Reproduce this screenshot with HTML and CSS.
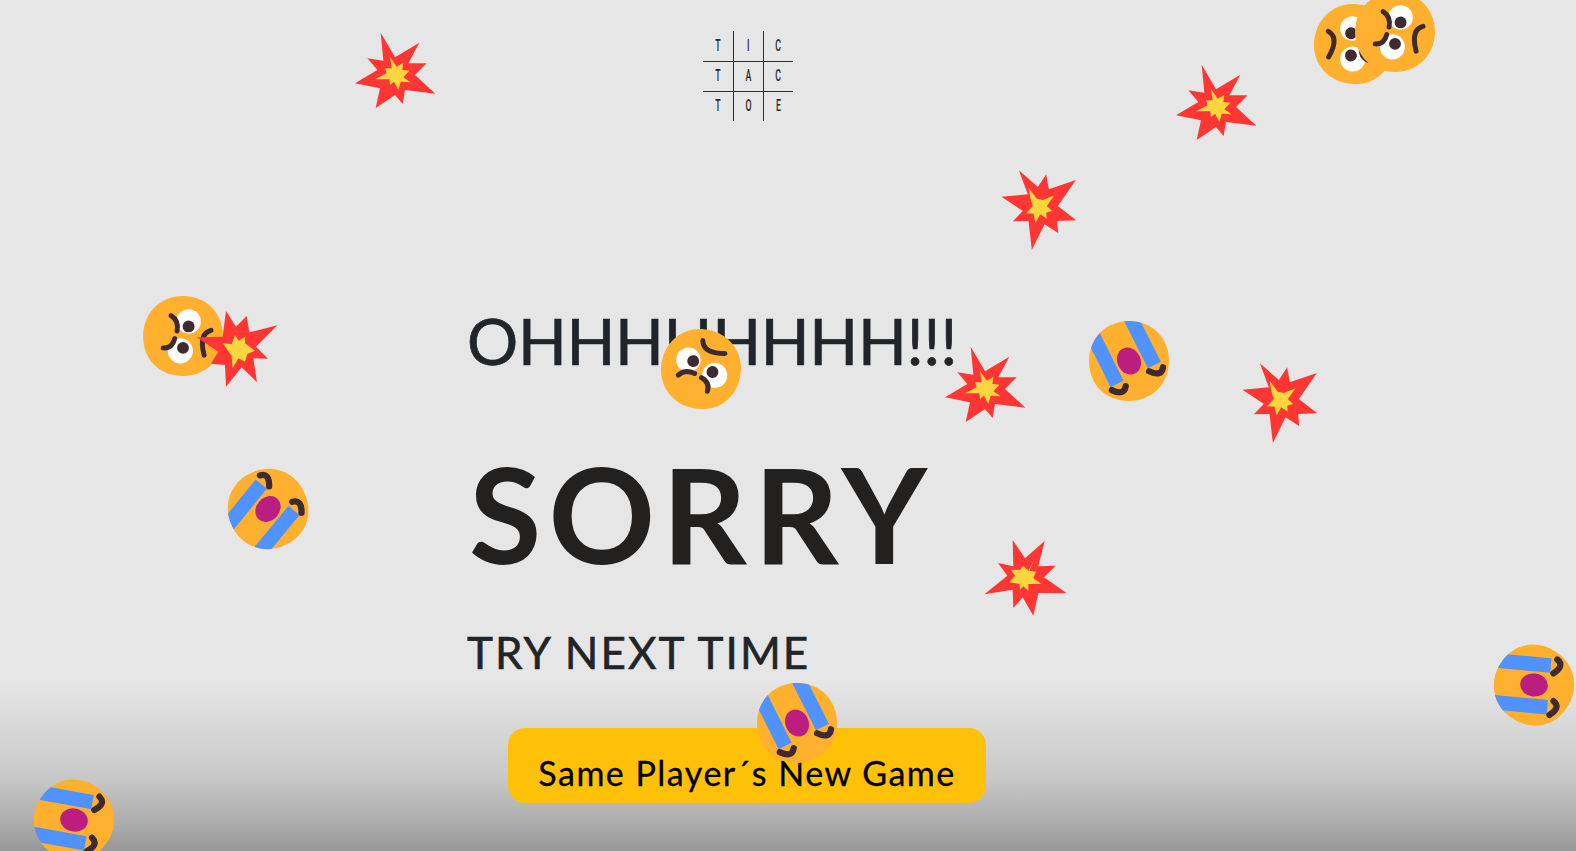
FILE: index.html
```html
<!DOCTYPE html>
<html lang="en">
<head>
<meta charset="utf-8">
<title>Tic Tac Toe</title>
<link rel="stylesheet" href="styles.css">
</head>
<body>
<svg class="defs" aria-hidden="true">
  <defs>
    <clipPath id="blobclip"><path d="M0,-121C70,-121 121,-70 121,0C121,70 68,121 0,121C-70,121 -121,74 -121,0C-121,-70 -68,-121 0,-121Z"/></clipPath>
  </defs>
  <symbol id="boomA" viewBox="0 0 330 300">
    <polygon fill="#ff3633" points="122,38 165,112 238,68 205,130 260,130 225,165 286,221 195,210 188,252 165,225 107,264 120,205 45,190 112,150 82,115 130,122"/>
    <polygon fill="#fcd53f" points="150,110 170,140 190,128 187,150 208,152 190,172 212,187 182,185 175,210 162,185 150,195 148,178 105,178 140,160 135,145 155,145"/>
  </symbol>
  <symbol id="boomB" viewBox="200 20 260 270">
    <polygon fill="#ff3633" points="268,33 325,83 350,45 358,90 439,62 385,140 440,183 383,185 386,221 345,195 307,272 297,185 250,186 280,155 216,112 295,105"/>
    <polygon fill="#fcd53f" points="297,85 322,118 340,122 375,108 352,140 368,155 350,160 352,178 332,165 318,190 312,163 290,162 310,140 303,118"/>
  </symbol>
  <symbol id="boomC" viewBox="0 0 300 285">
    <polygon fill="#ff3633" points="128,33 165,88 224,36 205,112 257,110 222,145 290,193 205,192 190,260 158,205 130,237 128,182 43,196 112,140 84,102 130,112"/>
    <polygon fill="#fcd53f" points="195,88 178,125 198,128 190,148 215,165 175,165 175,185 160,172 150,182 148,165 118,160 135,140 122,122 150,122 160,110 175,125"/>
  </symbol>
  <symbol id="boomD" viewBox="0 0 480 360">
    <polygon fill="#ff3633" points="288,93 318,140 350,108 358,157 442,136 378,200 414,236 370,235 381,307 335,262 288,320 285,255 243,251 265,215 200,172 278,170"/>
    <polygon fill="#fcd53f" points="315,165 326,182 345,170 345,190 375,212 352,222 345,245 325,235 308,265 305,228 278,190 305,192"/>
  </symbol>
  <symbol id="cry" viewBox="-151.5 -151.5 303 303">
    <g clip-path="url(#blobclip)">
      <rect x="-153" y="-153" width="306" height="306" fill="#ffb02e"/>
      <path d="M-125,-108L-36,70M-14,-168L77,12" stroke="#5092ff" stroke-width="44" fill="none"/>
    </g>
    <ellipse rx="35" ry="42" transform="rotate(-25)" fill="#bb1d80"/>
    <path d="M-52,88Q-14,106 -10,76M61,31Q99,49 103,19" stroke="#402a32" stroke-width="19" stroke-linecap="round" fill="none"/>
  </symbol>
  <symbol id="stare" viewBox="-151.5 -151.5 303 303">
    <path fill="#ffb02e" d="M0,-121C70,-121 121,-70 121,0C121,70 68,121 0,121C-70,121 -121,74 -121,0C-121,-70 -68,-121 0,-121Z"/>
    <circle cx="17" cy="-44" r="37" fill="#fff"/>
    <circle cx="-8" cy="45" r="38" fill="#fff"/>
    <circle cx="17" cy="-29" r="18" fill="#402a32"/>
    <circle cx="0" cy="36" r="18" fill="#402a32"/>
    <path d="M-36,-62Q-12,-47 -18,-15M-60,36Q-33,38 -25,8M85,-17Q47,-7 64,58" stroke="#402a32" stroke-width="15" stroke-linecap="round" fill="none"/>
  </symbol>
</svg>

<main class="page">
  <div class="logo">
    <span class="cell"><span class="mark">T</span></span><span class="cell"><span class="mark">I</span></span><span class="cell"><span class="mark">C</span></span>
    <span class="cell"><span class="mark">T</span></span><span class="cell"><span class="mark">A</span></span><span class="cell"><span class="mark">C</span></span>
    <span class="cell"><span class="mark">T</span></span><span class="cell"><span class="mark">O</span></span><span class="cell"><span class="mark">E</span></span>
  </div>
  <h2 class="oh">OHHHHHHHH!!!</h2>
  <h1 class="sorry">SORRY</h1>
  <h3 class="next">TRY NEXT TIME</h3>
  <button class="again" type="button">Same Player´s New Game</button>
</main>

<svg class="float stare-a"><use href="#stare"/></svg>
<svg class="float stare-b"><use href="#stare"/></svg>
<svg class="float stare-c"><use href="#stare"/></svg>
<svg class="float stare-d"><use href="#stare"/></svg>
<svg class="float cry-a"><use href="#cry"/></svg>
<svg class="float cry-b"><use href="#cry"/></svg>
<svg class="float cry-c"><use href="#cry"/></svg>
<svg class="float cry-d"><use href="#cry"/></svg>
<svg class="float cry-e"><use href="#cry"/></svg>
<svg class="float boom-a1"><use href="#boomA"/></svg>
<svg class="float boom-a2"><use href="#boomA"/></svg>
<svg class="float boom-a3"><use href="#boomA"/></svg>
<svg class="float boom-b1"><use href="#boomB"/></svg>
<svg class="float boom-b2"><use href="#boomB"/></svg>
<svg class="float boom-c"><use href="#boomC"/></svg>
<svg class="float boom-d"><use href="#boomD"/></svg>
</body>
</html>
```
FILE: styles.css
```css
* { box-sizing: border-box; }
html, body { margin: 0; height: 851px; overflow: hidden; }
body {
  position: relative;
  background: linear-gradient(to bottom, #e6e6e6 0, #e6e6e6 680px, #dcdcdc 715px, #c9c9c9 775px, #a9a9a9 828px, #979797 851px);
  font-family: "Lato", "Noto Sans", sans-serif;
  color: #212529;
}
.defs { position: absolute; width: 0; height: 0; }

.page {
  width: 560px;
  margin-left: 467px;
  padding-top: 31px;
  display: flex;
  flex-direction: column;
}
.logo {
  width: 90px;
  margin-left: 2px;
  align-self: center;
  display: grid;
  grid-template-columns: 31px 30px 29px;
  grid-template-rows: 31px 30px 29px;
  font-family: "Roboto", sans-serif;
  font-size: 16px;
  font-weight: 500;
}
.cell {
  display: flex;
  align-items: center;
  justify-content: center;
  padding-bottom: 2px;
  border-right: 1px solid #2e2e2e;
  border-bottom: 1px solid #2e2e2e;
  color: #2b2b2b;
}
.cell:nth-child(3n) { border-right: 0; }
.cell:nth-child(n+7) { border-bottom: 0; }
.mark { display: block; transform: scaleX(0.55); }

.oh, .sorry, .next { margin: 0; font-weight: 400; white-space: nowrap; }
.oh {
  margin-top: 182px;
  font-size: 64px;
  line-height: 76px;
  letter-spacing: -0.3px;
  -webkit-text-stroke: 0.7px #212529;
}
.sorry {
  margin-top: 68px;
  margin-left: 2px;
  font-size: 132px;
  line-height: 132px;
  font-weight: 700;
  letter-spacing: 7px;
  color: #23211f;
}
.next {
  margin-top: 47px;
  font-size: 44px;
  line-height: 52px;
  letter-spacing: 2.1px;
  -webkit-text-stroke: 0.6px #212529;
}
.again {
  align-self: center;
  width: 478px;
  height: 75px;
  margin-top: 50px;
  padding: 14px 0 0;
  border: 0;
  border-radius: 17px;
  background: #ffc107;
  color: #000;
  font-family: inherit;
  font-size: 34px;
  line-height: 48px;
  letter-spacing: 1.5px;
  -webkit-text-stroke: 0.3px #000;
}

.float { position: absolute; width: 100px; height: 100px; overflow: visible; }
.stare-a { left: 133px; top: 286px; }
.stare-b { left: 651px; top: 319px; transform: rotate(-75deg); }
.stare-c { left: 1304px; top: -6px; transform: rotate(15deg) scaleX(-1); }
.stare-d { left: 1345px; top: -18px; }
.cry-a { left: 1079px; top: 311px; }
.cry-b { left: 747px; top: 673px; }
.cry-c { left: 218px; top: 459px; transform: rotate(-114deg); }
.cry-d { left: 1484px; top: 635px; transform: rotate(-58deg); }
.cry-e { left: 24px; top: 770px; transform: rotate(-53deg); }
.boom-a1 { left: 340px; top: 20px; width: 110px; height: 100px; }
.boom-a2 { left: 1161px; top: 52px; width: 110px; height: 100px; }
.boom-a3 { left: 930px; top: 334px; width: 110px; height: 100px; }
.boom-b1 { left: 996px; top: 166px; width: 87px; height: 90px; }
.boom-b2 { left: 1237px; top: 359px; width: 87px; height: 90px; }
.boom-c { left: 970px; top: 529px; width: 100px; height: 95px; }
.boom-d { left: 130px; top: 280px; width: 160px; height: 120px; }
```
